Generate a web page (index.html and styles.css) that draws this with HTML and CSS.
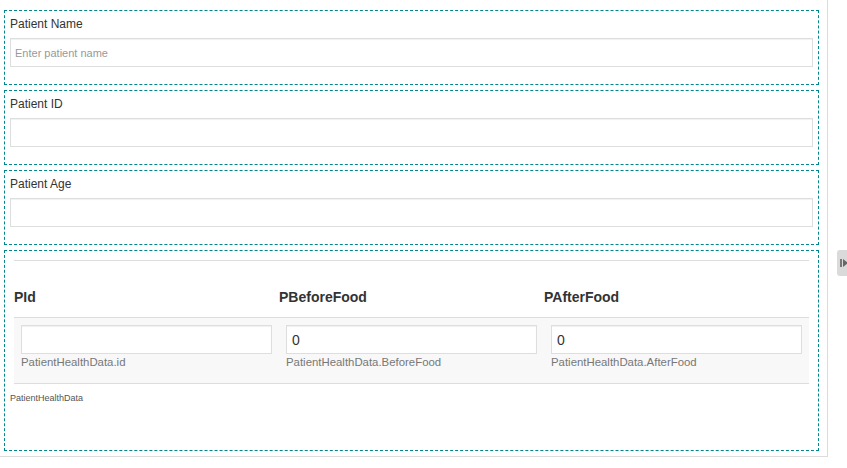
FILE: index.html
```html
<!DOCTYPE html>
<html>
<head>
<meta charset="utf-8">
<link rel="stylesheet" href="styles.css">
</head>
<body>
<div class="page">
  <div class="section field">
    <div class="label">Patient Name</div>
    <input class="input input-small" type="text" placeholder="Enter patient name">
  </div>
  <div class="section field">
    <div class="label">Patient ID</div>
    <input class="input" type="text">
  </div>
  <div class="section field">
    <div class="label">Patient Age</div>
    <input class="input" type="text">
  </div>
  <div class="section grid-section">
    <table class="grid">
      <thead>
        <tr><th>PId</th><th>PBeforeFood</th><th>PAfterFood</th></tr>
      </thead>
      <tbody>
        <tr>
          <td><input class="input" type="text"><div class="caption">PatientHealthData.id</div></td>
          <td><input class="input" type="text" value="0"><div class="caption">PatientHealthData.BeforeFood</div></td>
          <td><input class="input" type="text" value="0"><div class="caption">PatientHealthData.AfterFood</div></td>
        </tr>
      </tbody>
    </table>
    <div class="grid-name">PatientHealthData</div>
  </div>
</div>
<div class="side-tab">
  <svg width="8" height="8" viewBox="0 0 8 8"><rect x="0" y="0" width="2" height="8" fill="#777"/><path d="M3 0 L8 4 L3 8 Z" fill="#666"/></svg>
</div>
</body>
</html>
```
FILE: styles.css
```css
* { box-sizing: border-box; }
html, body { margin: 0; padding: 0; background: #fff; }
body { font-family: "Liberation Sans", Arial, sans-serif; color: #333; width: 847px; height: 468px; overflow: hidden; }
.page {
  width: 828px;
  height: 457px;
  border-right: 1px solid #dcdcdc;
  border-bottom: 1px solid #dcdcdc;
  padding: 10px 0 0 4px;
  display: flex;
  flex-direction: column;
  gap: 5px;
}
.section {
  width: 815px;
  border: 1px dashed #00868b;
}
.field {
  height: 75px;
  padding: 5px 5px 0 5px;
}
.label {
  font-size: 12px;
  line-height: 16px;
  color: #333;
  margin-bottom: 6px;
}
.input {
  display: block;
  width: 100%;
  height: 29px;
  border: 1px solid #dedede;
  box-shadow: inset 0 1px 1px rgba(0,0,0,0.06);
  padding: 0 5px;
  font-family: "Liberation Sans", Arial, sans-serif;
  font-size: 14px;
  color: #333;
  background: #fff;
  outline: none;
  margin: 0;
}
.input-small { font-size: 11px; padding: 0 4px; }
.input::placeholder { color: #999; }
.grid-section {
  height: 201px;
  padding: 9px 9px 0 9px;
}
.grid {
  width: 100%;
  border-collapse: collapse;
  table-layout: fixed;
  border-top: 1px solid #dddddd;
}
.grid th {
  text-align: left;
  font-size: 14px;
  line-height: 16px;
  font-weight: bold;
  color: #333;
  height: 57px;
  vertical-align: bottom;
  padding: 0 0 12px 0;
  border-bottom: 1px solid #dddddd;
}
.grid tbody tr { background: #f8f8f8; }
.grid td {
  padding: 7px 7px 13px 7px;
  vertical-align: top;
  border-bottom: 1px solid #dddddd;
}
.caption {
  font-size: 11.4px;
  line-height: 16px;
  color: #777;
}
.grid-name {
  font-size: 9px;
  line-height: 12px;
  color: #555;
  margin: 8px 0 0 -4px;
}
.side-tab {
  position: absolute;
  left: 837px;
  top: 250px;
  width: 12px;
  height: 26px;
  background: #dadada;
  border-radius: 3px 0 0 3px;
  display: flex;
  align-items: center;
  padding-left: 3px;
}
.side-tab svg { display: block; }
```
